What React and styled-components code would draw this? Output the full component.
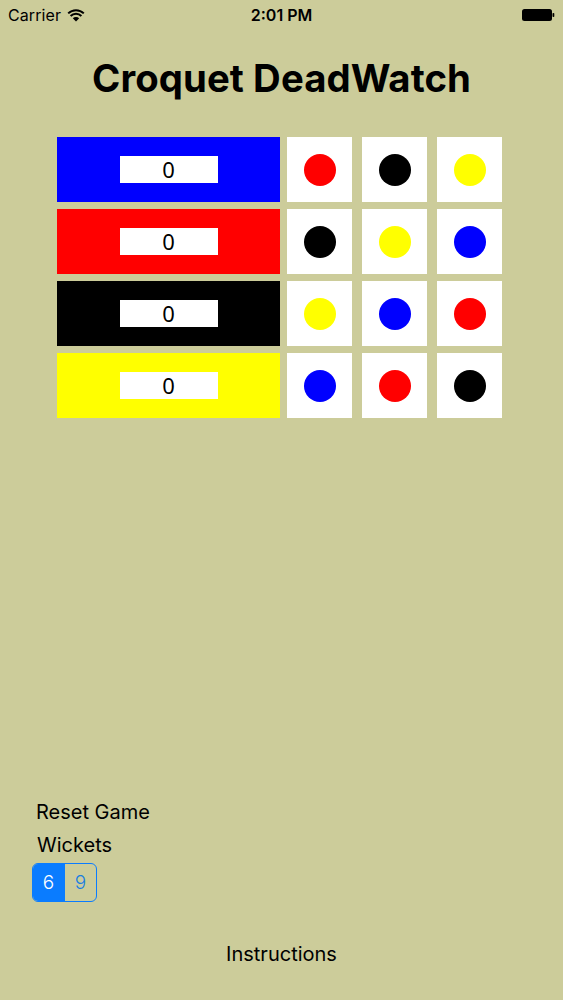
import React from "react";
import styled, { createGlobalStyle } from "styled-components";

const Global = createGlobalStyle`
  html, body { margin: 0; padding: 0; background: #cccc9a; }
  body { font-family: Inter, "Noto Sans", "Liberation Sans", sans-serif; color: #000; }
`;

const Page = styled.div`
  width: 563px;
  height: 1000px;
  display: flex;
  flex-direction: column;
  background: #cccc9a;
  overflow: hidden;
`;

const StatusBar = styled.div`
  height: 30px;
  display: grid;
  grid-template-columns: 1fr auto 1fr;
  align-items: center;
  padding: 0 8px;
  font-size: 16px;
  box-sizing: border-box;
`;

const Carrier = styled.div`
  display: flex;
  align-items: center;
  gap: 6px;
  letter-spacing: 0.1px;
`;

const Time = styled.div`
  font-weight: 600;
`;

const Battery = styled.div`
  justify-self: end;
  display: flex;
  align-items: center;
`;

const Title = styled.h1`
  margin: 26px 0 0;
  font-size: 38.3px;
  line-height: 44px;
  font-weight: 700;
  text-align: center;
  letter-spacing: 0.1px;
`;

const Board = styled.div`
  margin: 37px 0 0 57px;
  display: flex;
  flex-direction: column;
  gap: 7px;
`;

const Row = styled.div`
  display: flex;
  align-items: stretch;
`;

const Bar = styled.div`
  width: 223px;
  height: 65px;
  background: ${(p) => p.$color};
  display: flex;
  align-items: center;
  justify-content: center;
  margin-right: 7px;
`;

const Score = styled.div`
  width: 98px;
  height: 27px;
  box-sizing: border-box;
  padding-bottom: 2px;
  background: #fff;
  display: flex;
  align-items: center;
  justify-content: center;
  font-size: 22px;
  font-family: "Noto Sans", Inter, sans-serif;
  line-height: 1;
`;

const Cells = styled.div`
  display: flex;
  gap: 10px;
`;

const Cell = styled.div`
  width: 65px;
  height: 65px;
  background: #fff;
  display: flex;
  align-items: center;
  justify-content: center;
`;

const Dot = styled.div`
  width: 32px;
  height: 32px;
  border-radius: 50%;
  background: ${(p) => p.$color};
`;

const Bottom = styled.div`
  margin-top: auto;
  display: flex;
  flex-direction: column;
  padding-bottom: 34px;
`;

const TextButton = styled.div`
  font-size: 20px;
  line-height: 24px;
  margin-left: ${(p) => p.$left || 36}px;
  margin-top: ${(p) => p.$top || 0}px;
`;

const Segmented = styled.div`
  margin: 6px 0 0 32px;
  width: 65px;
  height: 39px;
  box-sizing: border-box;
  border: 1.5px solid #0a7cff;
  border-radius: 6px;
  display: flex;
  overflow: hidden;
`;

const Segment = styled.div`
  flex: 1;
  display: flex;
  align-items: center;
  justify-content: center;
  font-size: 19px;
  font-weight: 300;
  background: ${(p) => (p.$active ? "#0a7cff" : "transparent")};
  color: ${(p) => (p.$active ? "#fff" : "#1a7ee0")};
  & + & { border-left: 1.5px solid #0a7cff; }
`;

const Instructions = styled.div`
  margin-top: 40px;
  text-align: center;
  font-size: 20px;
  line-height: 24px;
`;

const Wifi = () => (
  <svg width="18" height="13" viewBox="0 0 18 13">
    <path d="M9 12.5 L5.8 9.2 A4.6 4.6 0 0 1 12.2 9.2 Z" fill="#000" />
    <path d="M3.6 7 A7.6 7.6 0 0 1 14.4 7" stroke="#000" strokeWidth="2" fill="none" />
    <path d="M1.2 4.4 A11 11 0 0 1 16.8 4.4" stroke="#000" strokeWidth="2" fill="none" />
  </svg>
);

const BatteryIcon = () => (
  <svg width="34" height="14" viewBox="0 0 34 14">
    <rect x="1" y="1" width="30" height="12" rx="2.5" fill="#000" />
    <rect x="31.5" y="5" width="1.8" height="4" rx="0.8" fill="#000" />
  </svg>
);

const rows = [
  { bar: "#0000ff", dots: ["#ff0000", "#000000", "#ffff00"] },
  { bar: "#ff0000", dots: ["#000000", "#ffff00", "#0000ff"] },
  { bar: "#000000", dots: ["#ffff00", "#0000ff", "#ff0000"] },
  { bar: "#ffff00", dots: ["#0000ff", "#ff0000", "#000000"] },
];

export default function App() {
  return (
    <Page>
      <Global />
      <StatusBar>
        <Carrier>
          Carrier <Wifi />
        </Carrier>
        <Time>2:01 PM</Time>
        <Battery>
          <BatteryIcon />
        </Battery>
      </StatusBar>
      <Title>Croquet DeadWatch</Title>
      <Board>
        {rows.map((r, i) => (
          <Row key={i}>
            <Bar $color={r.bar}>
              <Score>0</Score>
            </Bar>
            <Cells>
              {r.dots.map((d, j) => (
                <Cell key={j}>
                  <Dot $color={d} />
                </Cell>
              ))}
            </Cells>
          </Row>
        ))}
      </Board>
      <Bottom>
        <TextButton $left={36}>Reset Game</TextButton>
        <TextButton $left={37} $top={9}>Wickets</TextButton>
        <Segmented>
          <Segment $active>6</Segment>
          <Segment>9</Segment>
        </Segmented>
        <Instructions>Instructions</Instructions>
      </Bottom>
    </Page>
  );
}
